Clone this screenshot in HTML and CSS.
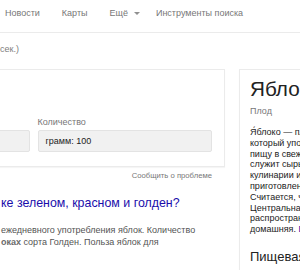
FILE: index.html
```html
<!DOCTYPE html>
<html lang="ru">
<head>
    <meta charset="UTF-8">
    <meta name="viewport" content="width=device-width, initial-scale=1.0">
    <title>яблоко калорийность</title>
    <link rel="stylesheet" href="styles.css">
</head>
<body>
    <div class="nav">
        <span class="nav-item">Новости</span>
        <span class="nav-item">Карты</span>
        <span class="nav-item more">Ещё<i class="caret"></i></span>
        <span class="nav-item">Инструменты поиска</span>
    </div>
    <div class="stats">сек.)</div>

    <div class="main">
        <div class="results">
            <div class="card calc">
                <div class="field">
                    <div class="label">Продукт</div>
                    <div class="box">Яблоко</div>
                </div>
                <div class="field">
                    <div class="label">Количество</div>
                    <div class="box">грамм: 100</div>
                </div>
            </div>
            <div class="report">Сообщить о проблеме</div>

            <div class="result">
                <h3 class="title"><a href="#">ке зеленом, красном и голден?</a></h3>
                <p class="snippet">ежедневного употребления яблок. Количество<br><b>оках</b> сорта Голден. Польза яблок для</p>
            </div>
        </div>

        <div class="card panel">
            <h2 class="panel-title">Яблоко</h2>
            <div class="panel-sub">Плод</div>
            <p class="panel-desc">Я́блоко — плод яблони,<br>который употребляется в<br>пищу в свежем виде,<br>служит сырьём в<br>кулинарии и для<br>приготовления напитков.<br>Считается, что родина —<br>Центральная Азия. Самое<br>распространённое — яблоня<br>домашняя. <a href="#">Википедия</a></p>
            <h3 class="panel-head">Пищевая ценность</h3>
        </div>
    </div>
</body>
</html>
```

FILE: styles.css
```css
body {
    margin: 0;
    width: 300px;
    overflow: hidden;
    background-color: #fff;
    font-family: "Liberation Sans", Arial, sans-serif;
    color: #222;
}

.nav {
    display: flex;
    align-items: center;
    height: 33px;
    padding: 0 0 6px 5px;
    box-sizing: border-box;
    border-bottom: 1px solid #ebebeb;
    font-size: 9px;
    color: #777;
    white-space: nowrap;
}

.nav-item {
    margin-right: 22px;
}

.more {
    display: flex;
    align-items: center;
    margin-right: 16px;
}

.caret {
    margin-left: 6px;
    border-top: 3px solid #909090;
    border-left: 3px solid transparent;
    border-right: 3px solid transparent;
}

.stats {
    margin-top: 10px;
    font-size: 9px;
    line-height: 12px;
    color: #808080;
}

.main {
    display: flex;
    align-items: flex-start;
    gap: 14px;
    margin: 14px 0 0 -158px;
}

.card {
    background-color: #fff;
    border: 1px solid #ebebeb;
    box-shadow: 0 1px 1px rgba(0, 0, 0, 0.04);
    box-sizing: border-box;
}

.results {
    flex-shrink: 0;
    width: 383px;
}

.calc {
    display: grid;
    grid-template-columns: 1fr 1fr;
    gap: 8px;
    padding: 46px 12px 14px;
}

.label {
    font-size: 9px;
    line-height: 12px;
    color: #777;
    margin-bottom: 2px;
}

.box {
    height: 22px;
    box-sizing: border-box;
    padding-left: 7px;
    background-color: #f1f1f1;
    border: 1px solid #e3e3e3;
    border-radius: 2px;
    font-size: 9px;
    line-height: 20px;
    color: #222;
}

.report {
    margin-top: 4px;
    padding-right: 13px;
    text-align: right;
    font-size: 7.7px;
    line-height: 10px;
    color: #777;
}

.result {
    margin-left: 159px;
    white-space: nowrap;
}

.title {
    margin: 14px 0 0;
    font-size: 12.4px;
    font-weight: normal;
    line-height: 16px;
}

.title a {
    color: #1a0dab;
    text-decoration: none;
}

.snippet {
    margin: 13px 0 0;
    font-size: 9px;
    line-height: 12px;
    color: #545454;
}

.snippet b {
    color: #6a6a6a;
}

.panel {
    flex-shrink: 0;
    width: 320px;
    height: 260px;
    padding: 6px 10px 0;
    white-space: nowrap;
}

.panel-title {
    margin: 0;
    font-size: 20.7px;
    font-weight: normal;
    line-height: 26px;
    color: #222;
}

.panel-sub {
    margin-top: 3px;
    font-size: 9px;
    line-height: 12px;
    color: #777;
}

.panel-desc {
    margin: 10px 0 0;
    font-size: 9px;
    line-height: 10.8px;
    color: #222;
}

.panel-desc a {
    color: #1a0dab;
    text-decoration: none;
}

.panel-head {
    margin: 13.5px 0 0;
    font-size: 13px;
    font-weight: normal;
    line-height: 17px;
    color: #222;
}
```
